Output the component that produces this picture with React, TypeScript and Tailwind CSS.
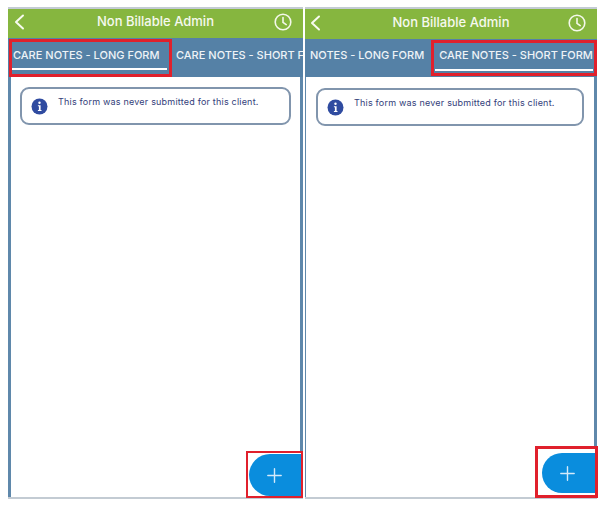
import React from "react";

function Clock() {
  return (
    <svg width="18" height="18" viewBox="0 0 18 18" fill="none" stroke="#f4f8ea" strokeWidth="1.6" strokeLinecap="round" strokeLinejoin="round">
      <circle cx="9" cy="9" r="7.8" />
      <path d="M9 4.6V9.4L12.2 11.6" />
    </svg>
  );
}

function Back() {
  return (
    <svg width="11" height="16" viewBox="0 0 11 16" fill="none" stroke="#f8fbf0" strokeWidth="2" strokeLinecap="round" strokeLinejoin="round">
      <path d="M9 1.5L2 8L9 14.5" />
    </svg>
  );
}

function Info() {
  return (
    <svg width="17" height="17" viewBox="0 0 17 17" className="shrink-0 mt-[2px]">
      <circle cx="8.5" cy="8.5" r="8" fill="#2f4ba0" />
      <circle cx="8.5" cy="4.8" r="1.2" fill="#fff" />
      <path d="M6.9 7.2H9.6V11.9H10.5V13H6.9V11.9H7.9V8.3H6.9Z" fill="#fff" />
    </svg>
  );
}

function Plus() {
  return (
    <svg width="15" height="15" viewBox="0 0 15 15" stroke="#d5eafa" strokeWidth="1.4" strokeLinecap="round">
      <path d="M7.5 0.8V14.2M0.8 7.5H14.2" />
    </svg>
  );
}

const tabText = "block leading-[14px] text-[11px] tracking-[0px] font-medium text-[#eef3f7] whitespace-nowrap";
const message = "block leading-[12px] text-[9px] tracking-[0.2px] text-[#33407a]";

export default function App() {
  return (
    <div className="w-[607px] h-[505px] bg-white flex items-start pl-2 pt-[7px] gap-[2px] overflow-hidden font-['Inter',sans-serif]">
      {/* left phone */}
      <div className="relative w-[295px] h-[492px] shrink-0 flex flex-col border-t-2 border-[#c3cbd3]">
        <div className="h-[29px] bg-[#86b63f] flex items-center justify-between pl-[6px] pr-[11px] pb-[4px] shrink-0">
          <Back />
          <span className="text-[13px] font-medium text-[#f6f9ef] ml-[12px]">Non Billable Admin</span>
          <Clock />
        </div>
        <div className="h-[39px] bg-[#5581a6] flex shrink-0 overflow-hidden">
          <div className="relative ml-[3px] w-[156px] shrink-0 h-full pt-[10px] pl-[2px]">
            <span className={tabText}>CARE NOTES - LONG FORM</span>
            <div className="absolute left-0 right-0 top-[30px] h-[2px] bg-white" />
          </div>
          <div className="ml-[9px] pt-[10px] shrink-0">
            <span className={tabText}>CARE NOTES - SHORT FORM</span>
          </div>
        </div>
        <div className="flex-1 border-x-[3px] border-[#5f88ab] bg-white pt-[10px] px-[9px]">
          <div className="h-[38px] border-2 border-[#8195ad] rounded-[9px] flex items-start pl-[9px] pt-[7px] gap-[10px]">
            <Info />
            <span className={message}>This form was never submitted for this client.</span>
          </div>
        </div>
        <div className="h-[2px] bg-[#c3cbd3] shrink-0" />
        <div className="absolute left-[1px] top-[30px] w-[163px] h-[38px] border-[3px] border-[#e0202c]" />
        <div className="absolute left-[238px] top-[442px] w-[57px] h-[47px] border-2 border-[#e0202c] bg-white overflow-hidden">
          <div className="absolute left-[1px] top-[1px] w-[60px] h-[42px] rounded-l-[21px] bg-[#0a8ddd] flex items-center pl-[18px]">
            <Plus />
          </div>
        </div>
      </div>

      {/* right phone */}
      <div className="relative w-[292px] h-[492px] shrink-0 flex flex-col border-t-2 border-[#c3cbd3]">
        <div className="h-[30px] bg-[#86b63f] flex items-center justify-between pl-[5px] pr-[11px] pb-[3px] shrink-0">
          <Back />
          <span className="text-[13px] font-medium text-[#f6f9ef] ml-[13px]">Non Billable Admin</span>
          <Clock />
        </div>
        <div className="h-[38px] bg-[#5581a6] flex shrink-0 overflow-hidden">
          <div className="ml-[5px] pt-[9px] shrink-0">
            <span className={tabText}>NOTES - LONG FORM</span>
          </div>
          <div className="relative ml-[11px] w-[158px] shrink-0 h-full pt-[9px] pl-[4px]">
            <span className={tabText}>CARE NOTES - SHORT FORM</span>
            <div className="absolute left-0 right-0 top-[30px] h-[2px] bg-white" />
          </div>
        </div>
        <div className="flex-1 border-r-[3px] border-l border-[#5f88ab] bg-white pt-[11px] px-[10px]">
          <div className="h-[38px] border-2 border-[#8195ad] rounded-[9px] flex items-start pl-[9px] pt-[7px] gap-[10px]">
            <Info />
            <span className={message}>This form was never submitted for this client.</span>
          </div>
        </div>
        <div className="h-[2px] bg-[#c3cbd3] shrink-0" />
        <div className="absolute left-[126px] top-[31px] w-[166px] h-[36px] border-[3px] border-[#e0202c]" />
        <div className="absolute left-[230px] top-[437px] w-[63px] h-[52px] border-[3px] border-[#e0202c] bg-white overflow-hidden">
          <div className="absolute left-[4px] top-[4px] w-[60px] h-[40px] rounded-l-[20px] bg-[#0a8ddd] flex items-center pl-[18px]">
            <Plus />
          </div>
        </div>
      </div>
    </div>
  );
}
